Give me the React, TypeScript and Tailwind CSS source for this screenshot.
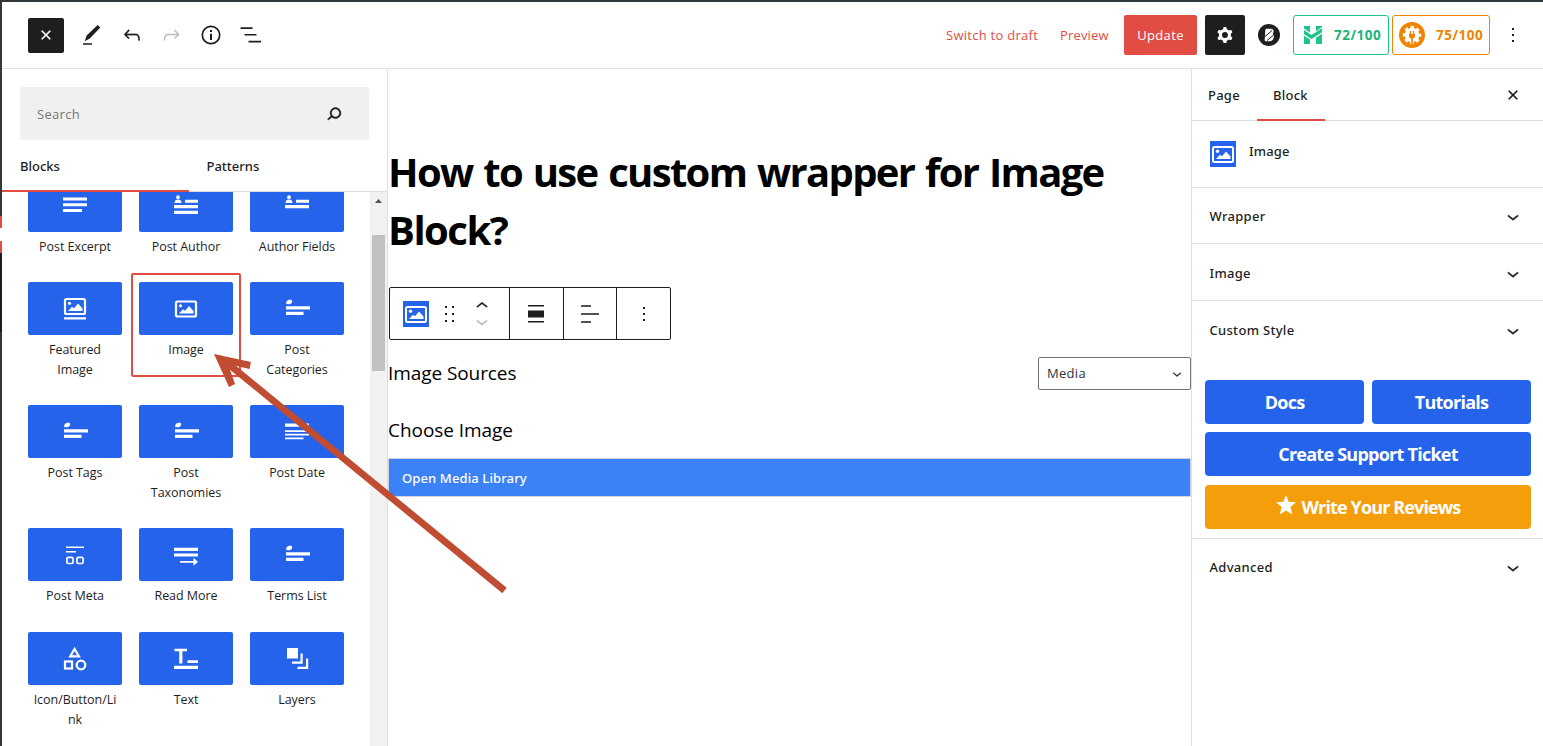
import type { ReactNode } from "react";

type IconProps = { children: ReactNode; size?: number; className?: string };

function Wp({ children, size = 24, className = "" }: IconProps) {
  return (
    <svg viewBox="0 0 24 24" width={size} height={size} fill="currentColor" className={"shrink-0 " + className}>
      {children}
    </svg>
  );
}

const closePath = <path d="M12 13.06l3.712 3.713 1.061-1.06L13.061 12l3.712-3.712-1.06-1.06L12 10.938 8.288 7.227l-1.061 1.06L10.939 12l-3.712 3.712 1.06 1.061L12 13.061z" stroke="currentColor" strokeWidth="0.200" />;
const chevronDown = <path d="M17.5 11.1L12 15.500l-5.500-4.400.9-1.200L12 13.500l4.500-3.600 1 1.200z" stroke="currentColor" strokeWidth="0.300" />;
const chevronUp = <path d="M6.500 12.400L12 8l5.500 4.400-.9 1.200L12 10l-4.500 3.600-1-1.200z" stroke="currentColor" strokeWidth="0.200" />;
const moreVertical = <path d="M13 19h-2v-2h2v2zm0-6h-2v-2h2v2zm0-6h-2V5h2v2z" />;

function Glyph({ children }: { children: ReactNode }) {
  return (
    <svg viewBox="0 0 26 26" width={26} height={26} fill="#fff" className="shrink-0">
      {children}
    </svg>
  );
}

const excerptGlyph = <path d="M1 4.500h24v3H1zM1 10.300h24v3H1zM1 16h19v3H1z" />;
const authorGlyph = (
  <>
    <circle cx="5" cy="4.200" r="1.900" />
    <path d="M1.500 10c0-2.600 1.500-3.600 3.500-3.600s3.500 1 3.500 3.600zM12 6.700h13v3H12zM1 12.100h24v3.200H1zM1 17.700h24v3.200H1z" />
  </>
);
const authorFieldsGlyph = (
  <>
    <circle cx="5" cy="4.200" r="1.900" />
    <path d="M1.500 10c0-2.600 1.500-3.600 3.500-3.600s3.500 1 3.500 3.600zM12 6.700h13v3H12zM1 12.100h24v3.200H1z" />
  </>
);
const imageGlyph = (
  <>
    <rect x="3" y="5.500" width="20" height="15" rx="1.500" fill="none" stroke="#fff" strokeWidth="2.200" />
    <circle cx="7.500" cy="9.800" r="1.600" />
    <path d="M6 17.500l4-4.200 2 1.500 4-4.700 4.500 4.900v2.500z" />
  </>
);
const featuredGlyph = (
  <>
    <rect x="3" y="3" width="20" height="15" rx="1.500" fill="none" stroke="#fff" strokeWidth="2.200" />
    <circle cx="7.500" cy="7.300" r="1.600" />
    <path d="M6 15l4-4.200 2 1.500 4-4.700 4.500 4.900v2.500zM2 21.300h22v2.200H2z" />
  </>
);
const tagGlyph = (
  <>
    <path d="M2.300 8.300c-.5-2.600.7-4.400 3-4.600h2c1.200.6 1.200 2.500 0 3.600-1 1-2.300 1-3.400.7z" />
    <path d="M2 10.200h24v3.300H2zM2 15.800h17.500v3.200H2z" />
  </>
);
const dateGlyph = <path d="M1 4.500h24v3.300H1zM1 11.200h24v1.700H1zM1 14.800h24v1.700H1zM1 18.500h18.500v1.700H1z" />;
const metaGlyph = (
  <>
    <path d="M4 4.500h18V6H4zM4 9h10v1.600H4z" />
    <rect x="4.900" y="15.300" width="6.200" height="6.200" rx="1.500" fill="none" stroke="#fff" strokeWidth="1.700" />
    <rect x="14.900" y="15.300" width="6.200" height="6.200" rx="1.500" fill="none" stroke="#fff" strokeWidth="1.700" />
  </>
);
const readMoreGlyph = <path d="M1 5.800h24v3.300H1zM1 11.600h24v3H1zM7 19h13.500v-3.200L25 20l-4.500 3.800v-3H7z" />;
const shapesGlyph = (
  <>
    <path d="M12.600 3l4.400 7.400H8.200z" fill="none" stroke="#fff" strokeWidth="2.200" />
    <rect x="3" y="15.500" width="7" height="7" fill="none" stroke="#fff" strokeWidth="2.200" />
    <circle cx="19" cy="19" r="4.300" fill="none" stroke="#fff" strokeWidth="2.300" />
  </>
);
const textGlyph = <path d="M1.500 2.700h12.500v2.600H9.400V17.500H6.200V5.300H1.500zM14.500 14.200h10.500v2.700H14.500zM1 19.700h24v3.200H1z" />;
const layersGlyph = <path d="M3 2h11v10.500H3zM16.500 7.500h2.200v10.300H8v-2.300h8.500zM22 12.500h2.200v10.500H13.500v-2.300H22z" />;

type Block = { label: string; icon: ReactNode; active?: boolean };

const rows: { height: string; blocks: Block[] }[] = [
  {
    height: "h-[103px]",
    blocks: [
      { label: "Post Excerpt", icon: excerptGlyph },
      { label: "Post Author", icon: authorGlyph },
      { label: "Author Fields", icon: authorFieldsGlyph },
    ],
  },
  {
    height: "h-[123px]",
    blocks: [
      { label: "Featured Image", icon: featuredGlyph },
      { label: "Image", icon: imageGlyph, active: true },
      { label: "Post Categories", icon: tagGlyph },
    ],
  },
  {
    height: "h-[123px]",
    blocks: [
      { label: "Post Tags", icon: tagGlyph },
      { label: "Post Taxonomies", icon: tagGlyph },
      { label: "Post Date", icon: dateGlyph },
    ],
  },
  {
    height: "h-[104px]",
    blocks: [
      { label: "Post Meta", icon: metaGlyph },
      { label: "Read More", icon: readMoreGlyph },
      { label: "Terms List", icon: tagGlyph },
    ],
  },
  {
    height: "h-[124px]",
    blocks: [
      { label: "Icon/Button/Link", icon: shapesGlyph },
      { label: "Text", icon: textGlyph },
      { label: "Layers", icon: layersGlyph },
    ],
  },
];

function BlockTile({ block }: { block: Block }) {
  return (
    <div className="relative flex w-[94px] flex-col items-center">
      {block.active && <div className="absolute -top-[9px] -left-[8px] h-[104px] w-[110px] rounded-[2px] border-2 border-[#e14d43]" />}
      <div className="flex h-[53px] w-[94px] items-center justify-center rounded-[2px] bg-[#2563eb]">
        <Glyph>{block.icon}</Glyph>
      </div>
      <div className="mt-[5px] w-[88px] text-center text-[12.500px] leading-[20px] tracking-[-0.050px] break-words text-[#1e1e1e]">{block.label}</div>
    </div>
  );
}

function ImageBadge() {
  return (
    <svg viewBox="0 0 26 26" width={26} height={26} className="shrink-0 bg-[#2563eb]">
      <rect x="3" y="6" width="20" height="15" rx="1.500" fill="none" stroke="#fff" strokeWidth="2" />
      <circle cx="7.500" cy="10.300" r="1.700" fill="#fff" />
      <path d="M6 18l4-4.200 2 1.500 4-4.800 4.500 5V18z" fill="#fff" />
    </svg>
  );
}

function TopBar() {
  return (
    <header className="flex h-[67px] shrink-0 items-center border-b border-[#e0e0e0] pl-[26px]">
      <button className="flex h-[35px] w-[36px] items-center justify-center rounded-[2px] bg-[#1e1e1e] text-white">
        <Wp>{closePath}</Wp>
      </button>
      <Wp className="ml-[16px] text-[#1e1e1e]">
        <path d="M20.300 4.500L17.700 2 6.600 12.500 4.700 18.200 9.800 15.500zM3 20.300h9v1.500H3z" />
      </Wp>
      <Wp className="ml-[16px] text-[#1e1e1e]">
        <path stroke="currentColor" strokeWidth="0.200" d="M18.300 11.700c-.6-.6-1.400-.9-2.300-.9H6.700l2.900-3.300-1.100-1-4.500 5L8.500 16l1-1-2.700-2.700H16c.5 0 .9.200 1.300.5 1 1 1 3.400 1 4.500v.3h1.500v-.2c0-1.500 0-4.300-1.500-5.700z" />
      </Wp>
      <Wp className="ml-[15px] text-[#bdbdbd]">
        <path d="M16.100 6.500l-1.100 1 2.900 3.300H8.500c-.9 0-1.700.3-2.300.9-1.400 1.500-1.400 4.200-1.400 5.600v.2h1.500v-.3c0-1.100 0-3.500 1-4.500.3-.3.7-.5 1.300-.5h9.200L15 15l1.100 1.100 4.600-4.600-4.600-5z" />
      </Wp>
      <Wp className="ml-[16px] text-[#1e1e1e]">
        <circle cx="12" cy="12" r="8.700" fill="none" stroke="currentColor" strokeWidth="1.700" />
        <path d="M11 7h2v2h-2zM11 10.700h2v6.300h-2z" />
      </Wp>
      <Wp className="ml-[16px] text-[#1e1e1e]">
        <path d="M1.500 4.200h12v1.700h-12zM5.500 10.900h12v1.700h-12zM9.500 17.700h12.500v1.700H9.500z" />
      </Wp>
      <div className="ml-auto flex items-center text-[13px] text-[#e14d43]">
        <span className="w-[92px] pt-px tracking-[0.270px] whitespace-nowrap">Switch to draft</span>
        <span className="ml-[22px] w-[49px] pt-px tracking-[0.150px]">Preview</span>
        <button className="ml-[15px] h-10 w-[73px] rounded-[2px] bg-[#e14d43] pt-px tracking-[0.350px] text-white">Update</button>
        <button className="ml-2 flex h-10 w-10 items-center justify-center rounded-[2px] bg-[#1e1e1e] text-white">
          <Wp>
            <path fillRule="evenodd" clipRule="evenodd" d="M10.289 4.836A1 1 0 0111.275 4h1.306a1 1 0 01.987.836l.244 1.466c.787.260 1.503.679 2.108 1.218l1.393-.522a1 1 0 011.216.437l.653 1.130a1 1 0 01-.230 1.273l-1.148.944a6.025 6.025 0 010 2.435l1.149.946a1 1 0 01.230 1.272l-.653 1.130a1 1 0 01-1.216.437l-1.394-.522c-.605.540-1.320.958-2.108 1.218l-.244 1.466a1 1 0 01-.987.836h-1.306a1 1 0 01-.986-.836l-.244-1.466a5.995 5.995 0 01-2.108-1.218l-1.394.522a1 1 0 01-1.217-.436l-.653-1.131a1 1 0 01.230-1.272l1.149-.946a6.026 6.026 0 010-2.435l-1.148-.944a1 1 0 01-.230-1.272l.653-1.131a1 1 0 011.217-.437l1.393.522a5.994 5.994 0 012.108-1.218l.244-1.466zM14.929 12a3 3 0 11-6 0 3 3 0 016 0z" />
          </Wp>
        </button>
        <svg viewBox="0 0 24 24" width={24} height={24} className="ml-[12px]">
          <circle cx="12" cy="12" r="11" fill="#1e1e1e" />
          <path d="M9.700 5.700H14c2.800 0 3.400 3.500 1.600 5.200 2.400 2 1.200 7.300-2.600 7.300H9c-1.200 0-1.500-1-1.300-2l.6-9c.1-1 .5-1.500 1.400-1.500z" fill="#fff" />
          <path d="M7.500 14l7.500-6.500M10 17.500l6-5" stroke="#1e1e1e" strokeWidth="1" />
        </svg>
        <div className="ml-[12px] flex h-10 w-[96px] items-center rounded-[3px] border border-[#1fc48a] pl-[9px] font-bold text-[#1bb37a]">
          <svg viewBox="0 0 20 20" width={20} height={20} fill="#1fc48a">
            <path d="M1 1h6v6.600L1 3.600zM13 1h6v1L13 6.500zM1 5l7.500 5L19 3.200v4L8.500 14 1 9.200zM1 10.800l6 3.800V19H1zM13 12.800l6-4V19h-6zM1 14.500l2.500 0L1 17z" />
          </svg>
          <span className="ml-[11px] text-[13.500px] tracking-[0.500px]">72/100</span>
        </div>
        <div className="ml-[3px] flex h-10 w-[98px] items-center rounded-[3px] border border-[#f08300] pl-[6px] font-bold text-[#f08300]">
          <svg viewBox="0 0 26 26" width={26} height={26}>
            <circle cx="13" cy="13" r="13" fill="#f08300" />
            <circle cx="13" cy="13" r="7.300" fill="#fff" />
            <circle cx="13" cy="13" r="7.900" fill="none" stroke="#fff" strokeWidth="2.600" strokeDasharray="3.400 2.805" strokeDashoffset="1.700" />
            <path d="M10.800 9h1.300v3h1.800V9h1.300v3h.8v2c0 1.500-.8 2.300-2.200 2.600V23h-1.600v-6.400c-1.400-.3-2.200-1.100-2.200-2.600v-2h.8z" fill="#f08300" />
          </svg>
          <span className="ml-[11px] text-[13.500px] tracking-[0.500px]">75/100</span>
        </div>
        <Wp className="mr-[18px] ml-[11px] text-[#1e1e1e]">{moreVertical}</Wp>
      </div>
    </header>
  );
}

function Inserter() {
  return (
    <aside className="flex w-[386px] shrink-0 flex-col border-r border-[#e0e0e0]">
      <div className="mt-[18px] ml-[18px] flex h-[53px] w-[349px] shrink-0 items-center justify-between rounded-[2px] bg-[#f0f0f0] pr-[23px] pl-[17px] text-[13px] text-[#757575]">
        <span className="pt-[2px] tracking-[0.300px]">Search</span>
        <Wp className="text-[#1e1e1e]">
          <path
            stroke="currentColor"
            strokeWidth="0.400"
            d="M13.500 5.500C10.500 5.500 8 8 8 11c0 1.100.3 2.100.9 3l-3.400 3 1 1.100 3.400-2.900c1 .9 2.200 1.400 3.600 1.400 3 0 5.500-2.500 5.500-5.500C19 8 16.500 5.500 13.500 5.500zm0 9.500c-2.200 0-4-1.800-4-4s1.800-4 4-4 4 1.800 4 4-1.800 4-4 4z"
          />
        </Wp>
      </div>
      <div className="flex h-[52px] shrink-0 border-b border-[#ddd] font-['Noto_Sans','Open_Sans',sans-serif] text-[13px] font-medium text-[#1e1e1e]">
        <div className="-mb-px flex w-[187px] items-center border-b-2 border-[#e14d43] pt-[3px] pl-[18px]">Blocks</div>
        <div className="flex items-center pt-[2px] pl-[17.500px]">Patterns</div>
      </div>
      <div className="flex min-h-0 flex-1">
        <div className="flex-1 overflow-hidden">
          <div className="-mt-[13px] flex flex-col">
            {rows.map((row, i) => (
              <div key={i} className={"flex shrink-0 gap-[17px] pl-[26px] " + row.height}>
                {row.blocks.map((b) => (
                  <BlockTile key={b.label} block={b} />
                ))}
              </div>
            ))}
          </div>
        </div>
        <div className="flex w-[17px] flex-col items-center bg-[#f1f1f1]">
          <svg viewBox="0 0 7 4" width={7} height={4} className="mt-[7px]">
            <path d="M0 4l3.500-4L7 4z" fill="#505050" />
          </svg>
          <div className="mt-[32px] h-[136px] w-[13px] bg-[#c1c1c1]" />
        </div>
      </div>
    </aside>
  );
}

function Canvas() {
  return (
    <main className="flex w-[803px] shrink-0 flex-col pt-[74px]">
      <h1 className="text-[40px] leading-[58px] font-bold tracking-[-1.680px] whitespace-nowrap text-black [word-spacing:2px]">
        How to use custom wrapper for Image
        <br />
        <span className="tracking-[-1.500px]">Block?</span>
      </h1>
      <div className="mt-[28px] ml-px flex h-[53px] w-[282px] shrink-0 rounded-[2px] border border-[#1e1e1e] text-[#1e1e1e]">
        <div className="flex w-[120px] items-center border-r border-[#1e1e1e] pl-[13px]">
          <ImageBadge />
          <Wp className="ml-[8px]">
            <path d="M8 4h2v2H8zM15 4h2v2h-2zM8 11h2v2H8zM15 11h2v2h-2zM8 18h2v2H8zM15 18h2v2h-2z" />
          </Wp>
          <div className="ml-[9px] flex flex-col">
            <Wp className="-mb-[3px]">{chevronUp}</Wp>
            <Wp className="-mt-[5px] text-[#bdbdbd]">{chevronDown}</Wp>
          </div>
        </div>
        <div className="flex w-[54px] items-center justify-center border-r border-[#1e1e1e] pr-px">
          <Wp>
            <path d="M4 3h16v1.600H4zM4 8.500h16v7H4zM4 19h16v1.600H4z" />
          </Wp>
        </div>
        <div className="flex w-[53px] items-center justify-center border-r border-[#1e1e1e]">
          <Wp>
            <path d="M3 3.200h10v1.600H3zM3 11.200h18v1.600H3zM3 19.200h10v1.600H3z" />
          </Wp>
        </div>
        <div className="flex flex-1 items-center justify-center">
          <Wp>{moreVertical}</Wp>
        </div>
      </div>
      <div className="mt-[17px] flex h-[33px] items-center justify-between text-black">
        <span className="text-[19px] tracking-[-0.080px]">Image Sources</span>
        <div className="flex h-[33px] w-[153px] items-center justify-between rounded-[2px] border border-[#757575] pr-[4px] pl-[8px] text-[13px] text-[#2c3338]">
          <span className="tracking-[0.300px]">Media</span>
          <Wp size={18}>{chevronDown}</Wp>
        </div>
      </div>
      <div className="mt-[24px] flex h-[33px] items-center text-[19px] tracking-[-0.050px] text-black">Choose Image</div>
      <div className="mt-[11px] flex h-[39px] items-center border border-[#d1d5db] bg-[#3b82f6] pt-[2px] pl-[13px] font-['Noto_Sans','Open_Sans',sans-serif] text-[13px] font-medium tracking-[0.120px] text-white">Open Media Library</div>
    </main>
  );
}

function PanelRow({ label, className }: { label: string; className: string }) {
  return (
    <div className={"flex shrink-0 items-center justify-between border-[#e0e0e0] pr-[18px] pl-[17.500px] font-['Noto_Sans','Open_Sans',sans-serif] text-[13px] font-medium tracking-[0.300px] text-[#1e1e1e] " + className}>
      {label}
      <Wp>{chevronDown}</Wp>
    </div>
  );
}

function Settings() {
  return (
    <aside className="flex flex-1 flex-col border-l border-[#e0e0e0]">
      <div className="flex h-[52px] shrink-0 border-b border-[#ddd] font-['Noto_Sans','Open_Sans',sans-serif] text-[13px] font-medium tracking-[0.250px] text-[#1e1e1e]">
        <div className="flex w-[65px] items-center pt-[2px] pl-[16px]">Page</div>
        <div className="-mb-px flex w-[68px] items-center border-b-2 border-[#e14d43] pt-[3px] pl-[16px]">Block</div>
        <Wp className="my-auto mr-[18px] ml-auto">{closePath}</Wp>
      </div>
      <div className="flex h-[67px] shrink-0 items-start border-b border-[#e0e0e0] pt-[20px] pl-[18px] font-['Noto_Sans','Open_Sans',sans-serif] text-[13px] font-medium tracking-[0.150px] text-[#1e1e1e]">
        <ImageBadge />
        <span className="ml-[13px] leading-[20px]">Image</span>
      </div>
      <PanelRow label="Wrapper" className="h-[56px] border-b pt-[2px]" />
      <PanelRow label="Image" className="h-[57px] border-b pt-[3px]" />
      <PanelRow label="Custom Style" className="h-[59px]" />
      <div className="mt-[20px] ml-[13px] flex w-[326px] flex-col text-[18px] font-bold tracking-[-0.750px] text-white [word-spacing:1px]">
        <div className="flex gap-2">
          <button className="h-11 flex-1 rounded-[4px] bg-[#2563eb]">Docs</button>
          <button className="h-11 flex-1 rounded-[4px] bg-[#2563eb]">Tutorials</button>
        </div>
        <button className="mt-2 h-11 rounded-[4px] bg-[#2563eb]">Create Support Ticket</button>
        <button className="mt-[9px] flex h-11 items-center justify-center rounded-[4px] bg-[#f59e0b] tracking-[-0.870px]">
          <svg viewBox="0 0 20 20" width={20} height={20} fill="#fff" className="mr-[6px] mb-[4px]">
            <path d="M10 0l2.700 6.700 7.300.6-5.600 4.600 1.900 7.500L10 15.500l-6.300 3.900 1.900-7.500L0 7.300l7.300-.6z" />
          </svg>
          Write Your Reviews
        </button>
      </div>
      <PanelRow label="Advanced" className="mt-[9px] h-[58px] border-t" />
    </aside>
  );
}

function AdminEdge() {
  return (
    <div className="flex w-[2px] shrink-0 flex-col bg-[#32373c]">
      <div className="mt-[214px] h-[12px] bg-[#e14d43]" />
      <div className="h-[13px] bg-white" />
      <div className="h-[12px] bg-[#e14d43]" />
      <div className="h-[79px] bg-[#191e23]" />
    </div>
  );
}

export default function App() {
  return (
    <div className="relative flex h-[746px] w-[1543px] overflow-hidden border-t-2 border-[#32373c] bg-white font-['Open_Sans',sans-serif]">
      <AdminEdge />
      <div className="flex min-w-0 flex-1 flex-col">
        <TopBar />
        <div className="flex min-h-0 flex-1">
          <Inserter />
          <Canvas />
          <Settings />
        </div>
      </div>
      <svg viewBox="0 0 300 250" width={300} height={250} className="pointer-events-none absolute top-[348px] left-[212px]">
        <path d="M292.500 240.500L14 12" stroke="#c04c32" strokeWidth="6.800" />
        <path d="M2 4l37 8-1.500 7L16 14 23 34l-6 3z" fill="#c04c32" />
      </svg>
    </div>
  );
}
